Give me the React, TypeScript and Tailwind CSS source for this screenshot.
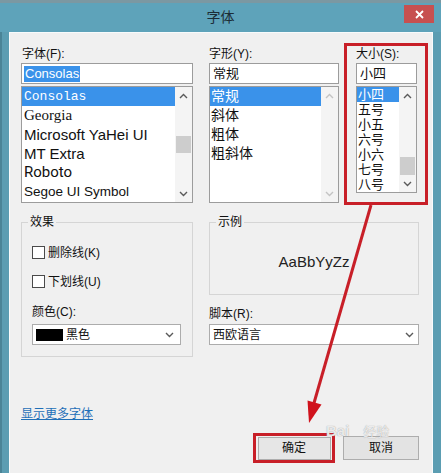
import React from "react";

function Chevron({ up, color = "#5a5a5a" }: { up?: boolean; color?: string }) {
  return (
    <svg width="9" height="6" viewBox="0 0 9 6">
      <polyline
        points={up ? "1,5 4.5,1.5 8,5" : "1,1 4.5,4.5 8,1"}
        fill="none"
        stroke={color}
        strokeWidth="1.4"
      />
    </svg>
  );
}

function ScrollBar({ thumb, disabled }: { thumb: React.ReactNode; disabled?: boolean }) {
  const c = disabled ? "#c4c4c4" : "#5a5a5a";
  return (
    <div className="w-[17px] h-full bg-[#f4f4f4] flex flex-col">
      <div className="h-[17px] flex items-center justify-center">
        <Chevron up color={c} />
      </div>
      <div className="flex-1 flex flex-col">{thumb}</div>
      <div className="h-[17px] flex items-center justify-center">
        <Chevron color={c} />
      </div>
    </div>
  );
}

function CheckRow({ label, className }: { label: string; className: string }) {
  return (
    <div className={"flex items-center h-[13px] " + className}>
      <div className="w-[13px] h-[13px] border border-[#4a4a4a] bg-white" />
      <span className="ml-[3px] text-[12px] leading-[16px]">{label}</span>
    </div>
  );
}

export default function App() {
  const fonts = [
    { name: "Consolas", cls: "font-['Liberation_Mono',monospace] text-[13px]" },
    { name: "Georgia", cls: "font-['Liberation_Serif',serif] text-[15px]" },
    { name: "Microsoft YaHei UI", cls: "text-[15px]" },
    { name: "MT Extra", cls: "text-[15px]" },
    { name: "Roboto", cls: "font-['Roboto',sans-serif] text-[15px]" },
    { name: "Segoe UI Symbol", cls: "text-[13.5px]" },
  ];
  const styles = ["常规", "斜体", "粗体", "粗斜体"];
  const sizes = ["小四", "五号", "小五", "六号", "小六", "七号", "八号"];

  return (
    <div className="relative w-[441px] h-[473px] overflow-hidden bg-[#5ea3ba] flex flex-col font-['Liberation_Sans','Noto_Sans_CJK_SC',sans-serif] text-[#111]">
      {/* top band */}
      <div className="h-[3px] bg-[#7b98a2]" />
      {/* title bar */}
      <div className="h-[29px] grid grid-cols-[1fr_auto_1fr]">
        <div />
        <div className="flex items-center text-[14px] text-[#1c2d36]">字体</div>
        <div className="flex justify-end items-start pt-[2px] pr-[7px]">
          <div className="w-[30px] h-[18px] bg-[#c75050] flex items-center justify-center">
            <svg width="9" height="9" viewBox="0 0 9 9">
              <path d="M1 1 L8 8 M8 1 L1 8" stroke="#fff" strokeWidth="1.8" />
            </svg>
          </div>
        </div>
      </div>

      <div className="flex-1 flex">
        {/* left frame */}
        <div className="w-[9px] border-l-2 border-[#4a8497] bg-[#5b9db2]" />
        {/* content */}
        <div className="w-[424px] bg-[#f0f0f0] border-l border-t border-r border-[#f8fbfc] pl-[11px] pt-[10px] flex flex-col">
          {/* top row */}
          <div className="flex items-start">
            {/* font column */}
            <div className="w-[172px] mt-[3px] flex flex-col">
              <div className="h-[16px] leading-[16px] text-[12px] pl-[1px]">字体(F):</div>
              <div className="mt-[1px] h-[21px] border border-[#9c9c9c] bg-white flex items-center pl-[2px]">
                <span className="bg-[#3a92ea] text-white text-[13px] leading-[16px] px-[1px]">Consolas</span>
              </div>
              <div className="mt-[2px] h-[117px] border border-[#9c9c9c] bg-white flex">
                <div className="flex-1 flex flex-col">
                  {fonts.map((f, i) => (
                    <div
                      key={f.name}
                      className={
                        "h-[19px] leading-[19px] pl-[2px] whitespace-nowrap " +
                        f.cls +
                        (i === 0 ? " bg-[#3a92ea] text-white" : "")
                      }
                    >
                      {f.name}
                    </div>
                  ))}
                </div>
                <ScrollBar thumb={<div className="mt-[32px] mx-[1px] h-[17px] bg-[#cdcdcd]" />} />
              </div>
            </div>

            {/* style column */}
            <div className="w-[130px] ml-[16px] mt-[3px] flex flex-col">
              <div className="h-[16px] leading-[16px] text-[12px]">字形(Y):</div>
              <div className="mt-[1px] h-[21px] border border-[#9c9c9c] bg-white flex items-center pl-[3px] text-[13px]">
                常规
              </div>
              <div className="mt-[2px] h-[117px] border border-[#9c9c9c] bg-white flex">
                <div className="flex-1 flex flex-col">
                  {styles.map((s, i) => (
                    <div
                      key={s}
                      className={
                        "h-[19px] leading-[19px] pl-[1px] text-[14px]" +
                        (i === 0 ? " bg-[#3a92ea] text-white" : "")
                      }
                    >
                      {s}
                    </div>
                  ))}
                </div>
                <ScrollBar disabled thumb={null} />
              </div>
            </div>

            {/* size column with red annotation */}
            <div className="w-[84px] h-[162px] ml-[5px] border-[3px] border-[#c81f28] pl-[9px] pr-[8px] flex flex-col">
              <div className="h-[16px] leading-[16px] text-[12px]">大小(S):</div>
              <div className="mt-[1px] h-[21px] border border-[#9c9c9c] bg-white flex items-center pl-[3px] text-[13px]">
                小四
              </div>
              <div className="mt-[2px] h-[107px] border border-[#9c9c9c] bg-white flex">
                <div className="flex-1 flex flex-col">
                  {sizes.map((s, i) => (
                    <div
                      key={s}
                      className={
                        "h-[15px] leading-[15px] pl-[1px] text-[13px]" +
                        (i === 0 ? " bg-[#3a92ea] text-white" : "")
                      }
                    >
                      {s}
                    </div>
                  ))}
                </div>
                <ScrollBar thumb={<div className="mt-auto mx-[1px] h-[18px] bg-[#cdcdcd]" />} />
              </div>
            </div>
          </div>

          {/* middle row */}
          <div className="mt-[9px] flex items-start">
            <fieldset className="w-[172px] h-[143px] border border-[#d5d5d5]">
              <legend className="ml-[6px] px-[2px] text-[12px] leading-[16px]">效果</legend>
              <div className="flex flex-col pl-[10px]">
                <CheckRow label="删除线(K)" className="mt-[16px]" />
                <CheckRow label="下划线(U)" className="mt-[16px]" />
                <div className="mt-[16px] h-[16px] leading-[16px] text-[12px]">颜色(C):</div>
                <div className="mt-[4px] w-[149px] h-[21px] border border-[#acacac] bg-white flex items-center pl-[3px] pr-[6px]">
                  <div className="w-[27px] h-[12px] bg-black" />
                  <span className="ml-[3px] text-[12px] flex-1">黑色</span>
                  <Chevron />
                </div>
              </div>
            </fieldset>

            <div className="ml-[16px] w-[210px] flex flex-col">
              <fieldset className="h-[81px] border border-[#d5d5d5]">
                <legend className="ml-[6px] px-[2px] text-[12px] leading-[16px]">示例</legend>
                <div className="h-[58px] pt-[6px] flex items-center justify-center text-[15px] text-[#222]">
                  AaBbYyZz
                </div>
              </fieldset>
              <div className="mt-[11px] h-[16px] leading-[16px] text-[12px]">脚本(R):</div>
              <div className="mt-[2px] h-[21px] border border-[#acacac] bg-white flex items-center pl-[3px] pr-[4px]">
                <span className="text-[12px] flex-1">西欧语言</span>
                <Chevron />
              </div>
            </div>
          </div>

          {/* link */}
          <div className="mt-[49px] h-[16px] leading-[16px] text-[12px]">
            <span className="text-[#1f6fb8] underline">显示更多字体</span>
          </div>

          {/* buttons */}
          <div className="mt-[11px] flex justify-end items-center gap-[8px] pr-[13px]">
            <div className="w-[82px] h-[30px] border-[3px] border-[#c81f28] flex items-center justify-center">
              <div className="w-[73px] h-[23px] border border-[#adadad] bg-[#e6e6e6] flex items-center justify-center text-[12px]">
                确定
              </div>
            </div>
            <div className="w-[76px] h-[24px] border border-[#adadad] bg-[#e3e3e3] flex items-center justify-center text-[12px]">
              取消
            </div>
          </div>
        </div>
        {/* right frame */}
        <div className="w-[8px] bg-[#5b9db2]" />
      </div>

      {/* watermark */}
      <div className="absolute left-[326px] top-[423px] leading-[15px] text-[15px] font-bold text-white/80 [text-shadow:0_0_1px_#8a8a8a] pointer-events-none">
        Bai<span className="ml-[14px] text-[13px] font-normal">经验</span>
      </div>

      {/* red annotation arrow */}
      <svg
        className="absolute left-0 top-0 pointer-events-none"
        width="441"
        height="473"
        viewBox="0 0 441 473"
      >
        <line x1="371" y1="205" x2="314" y2="403" stroke="#c81f28" strokeWidth="3" />
        <polygon points="309,423 321.5,404.5 307.5,400.5" fill="#d0121c" />
      </svg>
    </div>
  );
}
